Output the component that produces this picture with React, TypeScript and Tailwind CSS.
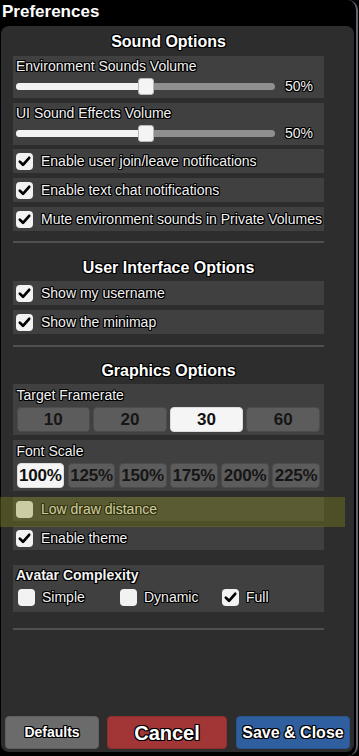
import React from "react";

const TS =
  "[text-shadow:-1px_-1px_0_#000,1px_-1px_0_#000,-1px_1px_0_#000,1px_1px_0_#000,0_1px_0_#000,0_-1px_0_#000,1px_0_0_#000,-1px_0_0_#000]";

function Check({ checked }: { checked: boolean }) {
  return (
    <div className="w-[17px] h-[17px] shrink-0 rounded-[4px] bg-[#f2f2f2] flex items-center justify-center">
      {checked && (
        <svg width="17" height="17" viewBox="0 0 17 17">
          <path d="M3.8 8.6 L7 11.8 L13.2 4.8" fill="none" stroke="#000" strokeWidth="2.7" strokeLinecap="round" strokeLinejoin="round" />
        </svg>
      )}
    </div>
  );
}

function CheckRow({ label, checked, className = "" }: { label: string; checked: boolean; className?: string }) {
  return (
    <div className={"h-[24px] bg-[#404040] flex items-center pl-[3px] gap-[8px] " + className}>
      <Check checked={checked} />
      <span className={"text-[14px] leading-[18px] text-[#f2f2f2] whitespace-nowrap " + TS}>{label}</span>
    </div>
  );
}

function SliderRow({ label, className = "" }: { label: string; className?: string }) {
  return (
    <div className={"h-[42px] bg-[#404040] pt-[1px] pl-[3px] " + className}>
      <div className={"h-[18px] text-[14px] leading-[18px] text-[#f2f2f2] " + TS}>{label}</div>
      <div className="h-[22px] flex items-center">
        <div className="relative w-[259px] h-[7px] rounded-full bg-[#8f8f8f]">
          <div className="absolute left-0 top-0 h-[7px] w-[130px] rounded-full bg-[#f2f2f2]" />
          <div className="absolute left-[122px] top-[-5px] w-[16px] h-[17px] rounded-[3px] bg-[#f4f4f4] border border-[#b8b8b8]" />
        </div>
        <span className={"ml-[10px] text-[14px] leading-[18px] text-[#f2f2f2] " + TS}>50%</span>
      </div>
    </div>
  );
}

function Heading({ children, className = "" }: { children: React.ReactNode; className?: string }) {
  return (
    <div className={"h-[22px] text-[16px] leading-[22px] font-bold text-center text-white " + TS + " " + className}>
      {children}
    </div>
  );
}

function Divider({ className = "" }: { className?: string }) {
  return <div className={"h-[2px] bg-[#505050] " + className} />;
}

export default function App() {
  const fr = ["10", "20", "30", "60"];
  const fs = ["100%", "125%", "150%", "175%", "200%", "225%"];
  return (
    <div className="w-[359px] h-[756px] bg-black overflow-hidden font-['Liberation_Sans',Arial,sans-serif] text-white">
      <div className="relative w-[358px] h-[756px] border-r-2 border-[#5f6573] rounded-r-[10px] flex flex-col">
        <div className={"h-[26px] pl-[2px] text-[17px] leading-[24px] font-bold text-white " + TS}>Preferences</div>
        <div className="ml-[1px] w-[353px] flex-1 mb-[4px] rounded-[8px] bg-[#2d2d2d] flex flex-col">
          <div className="pl-[12px] pt-[5px] w-[323px] flex flex-col">
            <Heading>Sound Options</Heading>
            <SliderRow label="Environment Sounds Volume" className="mt-[3px]" />
            <SliderRow label="UI Sound Effects Volume" className="mt-[5px]" />
            <CheckRow label="Enable user join/leave notifications" checked className="mt-[4px]" />
            <CheckRow label="Enable text chat notifications" checked className="mt-[5px]" />
            <CheckRow label="Mute environment sounds in Private Volumes" checked className="mt-[5px]" />
            <Divider className="mt-[10px]" />

            <Heading className="mt-[14px]">User Interface Options</Heading>
            <CheckRow label="Show my username" checked className="mt-[2px]" />
            <CheckRow label="Show the minimap" checked className="mt-[5px]" />
            <Divider className="mt-[11px]" />

            <Heading className="mt-[13px]">Graphics Options</Heading>
            <div className="mt-[2px] h-[51px] bg-[#404040] pt-[2px] pl-[3.5px] pr-[4px]">
              <div className={"h-[18px] text-[14px] leading-[18px] text-[#f2f2f2] " + TS}>Target Framerate</div>
              <div className="mt-[3px] grid grid-cols-4 gap-[3px]">
                {fr.map((v) => (
                  <div
                    key={v}
                    className={
                      "h-[25px] rounded-[4px] border flex items-center justify-center text-[17px] font-bold " +
                      (v === "30" ? "bg-[#f5f5f5] border-[#dcdcdc] text-[#111]" : "bg-[#5c5c5c] border-[#4c4c4c] text-[#161616]")
                    }
                  >
                    {v}
                  </div>
                ))}
              </div>
            </div>
            <div className="mt-[5px] h-[51px] bg-[#404040] pt-[2px] pl-[3.5px] pr-[4px]">
              <div className={"h-[18px] text-[14px] leading-[18px] text-[#f2f2f2] " + TS}>Font Scale</div>
              <div className="mt-[3px] grid grid-cols-6 gap-[3.5px]">
                {fs.map((v) => (
                  <div
                    key={v}
                    className={
                      "h-[25px] rounded-[4px] border flex items-center justify-center text-[17px] font-bold tracking-[-0.2px] " +
                      (v === "100%" ? "bg-[#f5f5f5] border-[#dcdcdc] text-[#111]" : "bg-[#5c5c5c] border-[#4c4c4c] text-[#161616]")
                    }
                  >
                    {v}
                  </div>
                ))}
              </div>
            </div>
            <CheckRow label="Low draw distance" checked={false} className="mt-[6px]" />
            <CheckRow label="Enable theme" checked className="mt-[5px]" />

            <div className="mt-[15px] h-[47px] bg-[#404040] pt-[1px] pl-[3px]">
              <div className={"h-[18px] text-[14px] leading-[18px] font-bold text-[#f2f2f2] " + TS}>Avatar Complexity</div>
              <div className="mt-[5px] pl-[2px] grid grid-cols-[102px_102px_102px]">
                {[
                  ["Simple", false],
                  ["Dynamic", false],
                  ["Full", true],
                ].map(([l, c]) => (
                  <div key={l as string} className="flex items-center gap-[7px]">
                    <Check checked={c as boolean} />
                    <span className={"text-[14px] leading-[17px] text-[#f2f2f2] " + TS}>{l as string}</span>
                  </div>
                ))}
              </div>
            </div>
            <Divider className="mt-[16px]" />
          </div>
          <div className="flex-1" />
          <div className="flex items-end pl-[4px] pb-[3px]">
            <div className={"w-[94px] h-[33px] rounded-[4px] bg-[#6b6b6b] border border-[#5e5e5e] flex items-center justify-center text-[14px] font-bold text-white " + TS}>
              Defaults
            </div>
            <div className={"ml-[8px] w-[120px] h-[33px] rounded-[4px] bg-[#a23535] border border-[#8e2e2e] flex items-center justify-center text-[20px] font-bold text-white " + TS}>
              Cancel
            </div>
            <div className={"ml-[9px] w-[114px] h-[33px] rounded-[4px] bg-[#2f5f9f] border border-[#28548e] flex items-center justify-center text-[16px] font-bold text-white " + TS}>
              Save &amp; Close
            </div>
          </div>
        </div>
        <div className="absolute left-0 top-[497px] w-[345px] h-[30px] bg-[rgba(137,137,29,0.37)] pointer-events-none" />
      </div>
    </div>
  );
}
